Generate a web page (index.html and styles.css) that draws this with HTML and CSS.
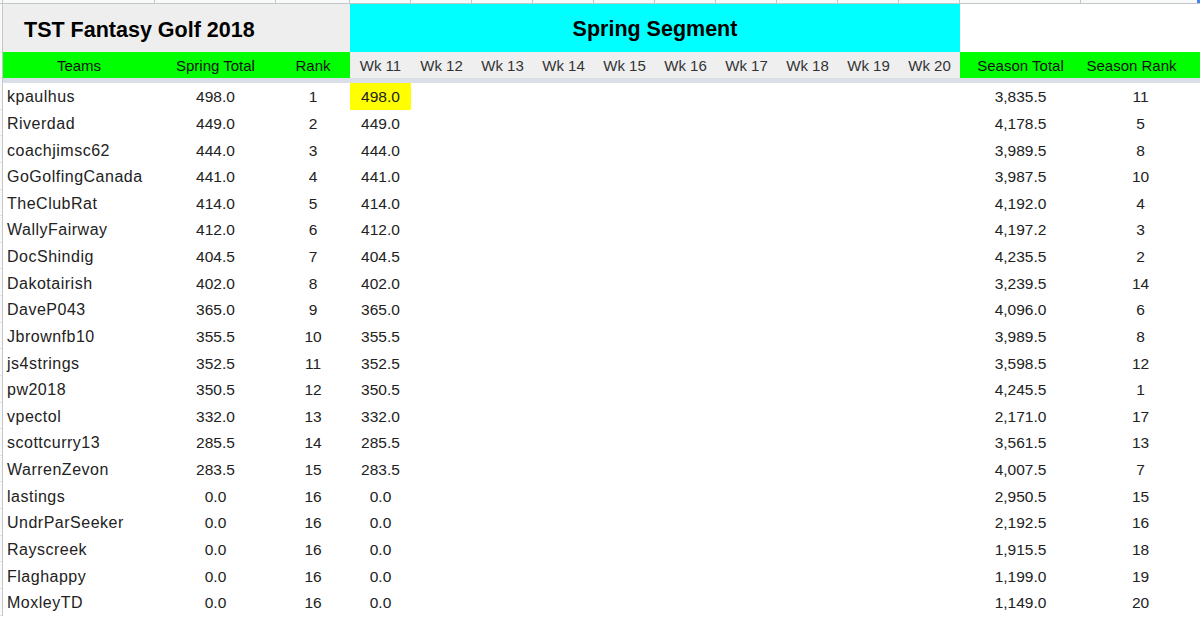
FILE: index.html
```html
<!DOCTYPE html>
<html lang="en">
<head>
<meta charset="utf-8">
<title>TST Fantasy Golf 2018</title>
<link rel="stylesheet" href="styles.css">
</head>
<body>
<div class="sheet">
  <div class="row strip">
    <div class="rh"></div><div class="c"></div><div class="c"></div><div class="c"></div>
    <div class="c"></div><div class="c"></div><div class="c"></div><div class="c"></div><div class="c"></div>
    <div class="c"></div><div class="c"></div><div class="c"></div><div class="c"></div><div class="c"></div>
    <div class="c"></div><div class="c last"><span class="sel"></span></div>
  </div>
  <div class="row title-row">
    <div class="rh"></div>
    <div class="title">TST Fantasy Golf 2018</div>
    <div class="segment">Spring Segment</div>
    <div class="blank"></div>
  </div>
  <div class="row head-row">
    <div class="rh"></div>
    <div class="h green">Teams</div>
    <div class="h green">Spring Total</div>
    <div class="h green">Rank</div>
    <div class="h wk">Wk 11</div>
    <div class="h wk">Wk 12</div>
    <div class="h wk">Wk 13</div>
    <div class="h wk">Wk 14</div>
    <div class="h wk">Wk 15</div>
    <div class="h wk">Wk 16</div>
    <div class="h wk">Wk 17</div>
    <div class="h wk">Wk 18</div>
    <div class="h wk">Wk 19</div>
    <div class="h wk">Wk 20</div>
    <div class="h green">Season Total</div>
    <div class="h green srank">Season Rank</div>
  </div>
  <div class="row divider"><div class="rh"></div><div class="bar"></div></div>

  <div class="row data"><div class="rh"></div><div class="name">kpaulhus</div><div class="num">498.0</div><div class="num">1</div><div class="num hl">498.0</div><div class="empty"></div><div class="num">3,835.5</div><div class="num">11</div></div>
  <div class="row data"><div class="rh"></div><div class="name">Riverdad</div><div class="num">449.0</div><div class="num">2</div><div class="num">449.0</div><div class="empty"></div><div class="num">4,178.5</div><div class="num">5</div></div>
  <div class="row data"><div class="rh"></div><div class="name">coachjimsc62</div><div class="num">444.0</div><div class="num">3</div><div class="num">444.0</div><div class="empty"></div><div class="num">3,989.5</div><div class="num">8</div></div>
  <div class="row data"><div class="rh"></div><div class="name">GoGolfingCanada</div><div class="num">441.0</div><div class="num">4</div><div class="num">441.0</div><div class="empty"></div><div class="num">3,987.5</div><div class="num">10</div></div>
  <div class="row data"><div class="rh"></div><div class="name">TheClubRat</div><div class="num">414.0</div><div class="num">5</div><div class="num">414.0</div><div class="empty"></div><div class="num">4,192.0</div><div class="num">4</div></div>
  <div class="row data"><div class="rh"></div><div class="name">WallyFairway</div><div class="num">412.0</div><div class="num">6</div><div class="num">412.0</div><div class="empty"></div><div class="num">4,197.2</div><div class="num">3</div></div>
  <div class="row data"><div class="rh"></div><div class="name">DocShindig</div><div class="num">404.5</div><div class="num">7</div><div class="num">404.5</div><div class="empty"></div><div class="num">4,235.5</div><div class="num">2</div></div>
  <div class="row data"><div class="rh"></div><div class="name">Dakotairish</div><div class="num">402.0</div><div class="num">8</div><div class="num">402.0</div><div class="empty"></div><div class="num">3,239.5</div><div class="num">14</div></div>
  <div class="row data"><div class="rh"></div><div class="name">DaveP043</div><div class="num">365.0</div><div class="num">9</div><div class="num">365.0</div><div class="empty"></div><div class="num">4,096.0</div><div class="num">6</div></div>
  <div class="row data"><div class="rh"></div><div class="name">Jbrownfb10</div><div class="num">355.5</div><div class="num">10</div><div class="num">355.5</div><div class="empty"></div><div class="num">3,989.5</div><div class="num">8</div></div>
  <div class="row data"><div class="rh"></div><div class="name">js4strings</div><div class="num">352.5</div><div class="num">11</div><div class="num">352.5</div><div class="empty"></div><div class="num">3,598.5</div><div class="num">12</div></div>
  <div class="row data"><div class="rh"></div><div class="name">pw2018</div><div class="num">350.5</div><div class="num">12</div><div class="num">350.5</div><div class="empty"></div><div class="num">4,245.5</div><div class="num">1</div></div>
  <div class="row data"><div class="rh"></div><div class="name">vpectol</div><div class="num">332.0</div><div class="num">13</div><div class="num">332.0</div><div class="empty"></div><div class="num">2,171.0</div><div class="num">17</div></div>
  <div class="row data"><div class="rh"></div><div class="name">scottcurry13</div><div class="num">285.5</div><div class="num">14</div><div class="num">285.5</div><div class="empty"></div><div class="num">3,561.5</div><div class="num">13</div></div>
  <div class="row data"><div class="rh"></div><div class="name">WarrenZevon</div><div class="num">283.5</div><div class="num">15</div><div class="num">283.5</div><div class="empty"></div><div class="num">4,007.5</div><div class="num">7</div></div>
  <div class="row data"><div class="rh"></div><div class="name">lastings</div><div class="num">0.0</div><div class="num">16</div><div class="num">0.0</div><div class="empty"></div><div class="num">2,950.5</div><div class="num">15</div></div>
  <div class="row data"><div class="rh"></div><div class="name">UndrParSeeker</div><div class="num">0.0</div><div class="num">16</div><div class="num">0.0</div><div class="empty"></div><div class="num">2,192.5</div><div class="num">16</div></div>
  <div class="row data"><div class="rh"></div><div class="name">Rayscreek</div><div class="num">0.0</div><div class="num">16</div><div class="num">0.0</div><div class="empty"></div><div class="num">1,915.5</div><div class="num">18</div></div>
  <div class="row data"><div class="rh"></div><div class="name">Flaghappy</div><div class="num">0.0</div><div class="num">16</div><div class="num">0.0</div><div class="empty"></div><div class="num">1,199.0</div><div class="num">19</div></div>
  <div class="row data"><div class="rh"></div><div class="name">MoxleyTD</div><div class="num">0.0</div><div class="num">16</div><div class="num">0.0</div><div class="empty"></div><div class="num">1,149.0</div><div class="num">20</div></div>
</div>
</body>
</html>
```

FILE: styles.css
```css
html, body {
  margin: 0;
  padding: 0;
  background: #ffffff;
}

body {
  font-family: "Liberation Sans", Arial, sans-serif;
  color: #222222;
  overflow: hidden;
}

.sheet {
  width: 1200px;
  --cols: 3px 152px 121px 74px repeat(10, 61px) 121px 119px;
}

.row {
  display: grid;
  grid-template-columns: var(--cols);
}

.rh {
  background: #f8f9fa;
  box-shadow: inset -1px 0 0 #c4c7c5;
}

/* thin strip of column headers at the very top */
.strip {
  height: 3px;
  background: #f8f9fa;
  border-bottom: 1px solid #c4c7c5;
  box-sizing: content-box;
}
.strip .c {
  box-shadow: inset -1px 0 0 #c4c7c5;
  position: relative;
}
.strip .last .sel {
  position: absolute;
  right: 0;
  top: 0;
  width: 3px;
  height: 3px;
  background: #4285f4;
}

.title-row {
  height: 48px;
}
.title {
  grid-column: 2 / span 3;
  background: #eeeeee;
  font-weight: bold;
  font-size: 21.5px;
  color: #000000;
  display: flex;
  align-items: center;
  padding: 4px 0 0 21px;
}
.segment {
  grid-column: 5 / span 10;
  background: #00ffff;
  font-weight: bold;
  font-size: 21.5px;
  color: #000000;
  display: flex;
  align-items: center;
  justify-content: center;
  padding-top: 3px;
}
.blank {
  grid-column: 15 / span 2;
  background: #ffffff;
}

.head-row {
  height: 26px;
  font-size: 15px;
}
.h {
  display: flex;
  align-items: center;
  justify-content: center;
  white-space: nowrap;
}
.green {
  background: #00ff00;
  color: #111111;
}
.wk {
  background: #efefef;
  color: #333333;
}
.srank {
  padding-right: 18px;
}

.divider {
  height: 5px;
}
.divider .bar {
  grid-column: 2 / span 15;
  background: #dadee6;
}

.data {
  height: 26.63px;
  font-size: 15.5px;
}
.data .rh {
  box-shadow: inset -1px 0 0 #c4c7c5, inset 0 -1px 0 #e2e3e3;
}
.data > div {
  display: flex;
  align-items: center;
  white-space: nowrap;
  padding-top: 2px;
  box-sizing: border-box;
}
.name {
  padding-left: 4px;
  font-size: 16px;
  letter-spacing: 0.5px;
  color: #222222;
}
.num {
  justify-content: center;
  color: #222222;
}
.empty {
  grid-column: span 9;
}
.hl {
  background: #ffff00;
}
```
